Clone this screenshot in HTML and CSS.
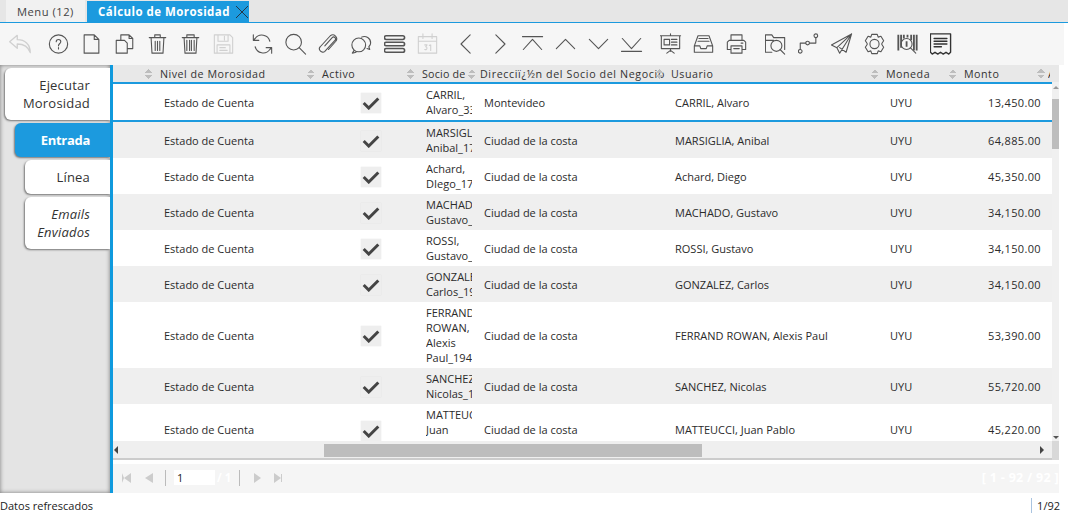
FILE: index.html
```html
<!DOCTYPE html>
<html lang="es">

<head>
    <meta charset="UTF-8">
    <title>Cálculo de Morosidad</title>
    <link rel="stylesheet" href="styles.css">
</head>

<body>
    <nav class="tabs">
        <a class="tab">Menu (12)</a>
        <a class="tab activa">Cálculo de Morosidad
            <svg class="cerrar" viewBox="0 0 12 12"><path d="M0 0L12 12M12 0L0 12" /></svg>
        </a>
    </nav>

    <div class="toolbar">
        <div class="grupo primero">
            <svg class="ico off" viewBox="0 0 24 24"><path d="M9 4L2 10l7 6v-4c6 0 10 2 12 8 0-8-5-12-12-12z" /></svg>
        </div>
        <div class="grupo">
            <svg class="ico" viewBox="0 0 24 24"><circle cx="12" cy="12" r="10" /><path d="M9.500 9.500c0-3.300 5-3.300 5 0 0 2-2.500 2-2.500 4.500M12 16v1.500" /></svg>
            <svg class="ico" viewBox="0 0 24 24"><path d="M4 2h11l5 5v15H4zM15 2v5h5" /></svg>
            <svg class="ico" viewBox="0 0 24 24"><path d="M3 8h9l3 3v11H3zM8 8V2h9l4 4v11h-6M17 2v4h4" /></svg>
            <svg class="ico" viewBox="0 0 24 24"><path d="M3 5h18M9 5V2h6v3M5 5l1 17h12l1-17M9.500 9v10M12 9v10M14.500 9v10" /></svg>
            <svg class="ico" viewBox="0 0 24 24"><path d="M3 5h18M8 5V2h8v3M5 5l1 17h12l1-17M8 8v11M11 8v11M13 8v11M16 8v11M8 2v3" /></svg>
            <svg class="ico off" viewBox="0 0 24 24"><path d="M2 2h17l3 3v17H2zM6 2v7h11V2M13 3.500v4M5 22v-9h14v9M8 16h6M8 19h8" /></svg>
        </div>
        <div class="grupo">
            <svg class="ico" viewBox="0 0 24 24"><path d="M20 9a9 9 0 0 0-16-3L2 8M2 2v6h6M4 15a9 9 0 0 0 16 3l2-2M22 22v-6h-6" /></svg>
            <svg class="ico" viewBox="0 0 24 24"><circle cx="10" cy="10" r="8.500" /><path d="M16 16l7 7" /></svg>
            <svg class="ico" viewBox="0 0 24 24"><path d="M8 14l8-9c2-2 5 1 3 3L8 20c-3 3-8-2-5-5L14 3c4-3 9 2 6 6l-8 9" /></svg>
            <svg class="ico" viewBox="0 0 24 24"><circle cx="9" cy="13" r="7.500" /><path d="M4 19l-2 3 4-1M12 4.500A7 7 0 0 1 22 11c0 2-1 3-2 4l1 3-3-1" /></svg>
            <svg class="ico gruesa" viewBox="0 0 24 24"><rect x="1" y="3" width="22" height="4" rx="2" /><rect x="1" y="10" width="22" height="4" rx="2" /><rect x="1" y="17" width="22" height="4" rx="2" /></svg>
            <svg class="ico off" viewBox="0 0 24 24"><path d="M2 4h20v18H2zM2 9h20M7 1v5M17 1v5M9 13h2.500l-1.500 2c2 0 2 4-1 3M14 13.500l1.500-.500V19" /></svg>
        </div>
        <div class="grupo">
            <svg class="ico" viewBox="0 0 24 24"><path d="M16 2L6 12l10 10" /></svg>
            <svg class="ico" viewBox="0 0 24 24"><path d="M8 2l10 10L8 22" /></svg>
            <svg class="ico" viewBox="0 0 24 24"><path d="M1 4h22M2 18L12 7l10 11" /></svg>
            <svg class="ico" viewBox="0 0 24 24"><path d="M2 17L12 7l10 10" /></svg>
            <svg class="ico" viewBox="0 0 24 24"><path d="M2 7l10 10L22 7" /></svg>
            <svg class="ico" viewBox="0 0 24 24"><path d="M2 6l10 11L22 6M1 20h22" /></svg>
        </div>
        <div class="grupo">
            <svg class="ico" viewBox="0 0 24 24"><path d="M1 3h22M2 3v14h20V3M12 1v2M12 17v3M12 19l-4 3M12 19l4 3M5 7h6v6H5zM13 7h6M13 10h6M13 13h6" /></svg>
            <svg class="ico" viewBox="0 0 24 24"><path d="M6 3h12l4 11v7H2v-7zM2 14h6l1 3h6l1-3h6M7 6h10M6 9h12" /></svg>
            <svg class="ico" viewBox="0 0 24 24"><path d="M6 8V2h12v6M6 18H2V10l2-2h16l2 2v8h-4M6 14h12v8H6zM9 17h6M17 11h2" /></svg>
        </div>
        <div class="grupo">
            <svg class="ico" viewBox="0 0 24 24"><path d="M8 21H1V2h7l2 3h12v13M1 8h9" /><circle cx="13" cy="14" r="6" /><path d="M17 18l5 5" /></svg>
            <svg class="ico" viewBox="0 0 24 24"><circle cx="3" cy="20" r="2" /><circle cx="11" cy="11" r="2" /><circle cx="20" cy="3" r="2" /><path d="M3 18v-7h6M13 11h7V5" /></svg>
            <svg class="ico" viewBox="0 0 24 24"><path d="M23 1L1 13l6 3 3 6zM23 1L7 16M23 1l-6 20-7-5" /></svg>
            <svg class="ico" viewBox="0 0 24 24"><path d="M9 1.500h6l1 3 3-1 3 5-2 3v1l2 3-3 5-3-1-1 3H9l-1-3-3 1-3-5 2-3v-1L2 8.500l3-5 3 1z" /><circle cx="12" cy="12" r="5" /></svg>
            <svg class="ico" viewBox="0 0 24 24"><path class="barra" d="M2 2v17M5 2v14M8 2v4M16 2v6M19 2v17M22 2v17M12 2v3" /><circle cx="11" cy="12" r="6" /><path class="barra" d="M11 9v6" /><path d="M15 16l6 6" /></svg>
            <svg class="ico negra" viewBox="0 0 24 24"><path d="M1 1h22v20l-2 2-3-2-3 2-3-2-3 2-3-2-3 2-2-2zM5 6h14M5 9h14M5 12h14M5 15h8" /></svg>
        </div>
    </div>

    <main class="contenido">
        <aside class="lateral">
            <a class="pestana">Ejecutar Morosidad</a>
            <a class="pestana sel nivel1">Entrada</a>
            <a class="pestana nivel2">Línea</a>
            <a class="pestana nivel2 cursiva">Emails Enviados</a>
        </aside>

        <section class="panel">
            <div class="grilla">
                <div class="titulos">
                    <div></div>
                    <div class="tit"><i class="orden"></i>Nivel de Morosidad</div>
                    <div class="tit"><i class="orden"></i>Activo</div>
                    <div class="tit corta"><i class="orden"></i><span>Socio del Negocio</span></div>
                    <div class="tit larga"><i class="orden"></i>Direcciï¿½n del Socio del Negocio</div>
                    <div class="tit"><i class="orden"></i>Usuario</div>
                    <div class="tit"><i class="orden"></i>Moneda</div>
                    <div class="tit"><i class="orden"></i>Monto</div>
                    <div class="tit corta2"><i class="orden"></i><span>A</span></div>
                </div>
                <div class="cuerpo">
                    <div class="filas" id="filas"></div>
                    <div class="vbar"><i class="fl arr"></i><b></b><i class="fl aba"></i></div>
                </div>
                <div class="hbar">
                    <div class="htrack"><i class="fl izq"></i><b></b><i class="fl der"></i></div>
                    <div class="esquina"></div>
                </div>
            </div>

            <div class="pager">
                <i class="pg primero-pg"></i>
                <i class="pg atras"></i>
                <span class="sep"></span>
                <input class="pagina" value="1">
                <span class="de">/ 1</span>
                <span class="sep"></span>
                <i class="pg adelante"></i>
                <i class="pg ultimo-pg"></i>
                <span class="total">[ 1 - 92 / 92 ]</span>
            </div>
        </section>
    </main>

    <footer class="estado">
        <span>Datos refrescados</span>
        <span class="cuenta">1/92</span>
    </footer>

    <template>
        <div class="fila">
            <div></div>
            <div class="nivel">Estado de Cuenta</div>
            <div class="activo"><span class="check"><svg viewBox="0 0 16 12"><path d="M1.500 6L6 10.500 14.500 2" /></svg></span></div>
            <div class="socio"><span></span></div>
            <div class="dir"></div>
            <div class="usu"></div>
            <div class="mon">UYU</div>
            <div class="monto"></div>
        </div>
    </template>

    <script>
        const datos = [
            ["CARRIL, Alvaro_3301", "Montevideo", "CARRIL, Alvaro", "13,450.00"],
            ["MARSIGLIA, Anibal_1730", "Ciudad de la costa", "MARSIGLIA, Anibal", "64,885.00"],
            ["Achard, DIego_1752", "Ciudad de la costa", "Achard, Diego", "45,350.00"],
            ["MACHADO, Gustavo_1811", "Ciudad de la costa", "MACHADO, Gustavo", "34,150.00"],
            ["ROSSI, Gustavo_1820", "Ciudad de la costa", "ROSSI, Gustavo", "34,150.00"],
            ["GONZALEZ, Carlos_1903", "Ciudad de la costa", "GONZALEZ, Carlos", "34,150.00"],
            ["FERRAND ROWAN, Alexis Paul_1940", "Ciudad de la costa", "FERRAND ROWAN, Alexis Paul", "53,390.00"],
            ["SANCHEZ, Nicolas_1955", "Ciudad de la costa", "SANCHEZ, Nicolas", "55,720.00"],
            ["MATTEUCCI, Juan Pablo_1960", "Ciudad de la costa", "MATTEUCCI, Juan Pablo", "45,220.00"]
        ];

        const filas = document.querySelector("#filas");
        const plantilla = document.querySelector("template").content;

        datos.forEach((d, i) => {
            const klon = plantilla.cloneNode(true);
            klon.querySelector(".socio span").textContent = d[0];
            klon.querySelector(".dir").textContent = d[1];
            klon.querySelector(".usu").textContent = d[2];
            klon.querySelector(".monto").textContent = d[3];
            if (i == 0) klon.querySelector(".fila").classList.add("actual");
            filas.appendChild(klon);
        });
    </script>
</body>

</html>
```

FILE: styles.css
```css
* {
    box-sizing: border-box;
}

html,
body {
    height: 100%;
}

body {
    margin: 0;
    display: flex;
    flex-direction: column;
    height: 514px;
    overflow: hidden;
    font-family: "Open Sans", Arial, sans-serif;
    font-size: 11px;
    color: #2b2b2b;
    background-color: white;
}

/* pestanas de arriba */
.tabs {
    display: flex;
    height: 23px;
    padding-left: 6px;
    gap: 2px;
    background-color: #e6e6e6;
    border-bottom: 1px solid #1c9ade;
    flex: none;
}

.tab {
    display: flex;
    align-items: center;
    width: 79px;
    height: 22px;
    padding: 0 11px;
    font-size: 11.200px;
    letter-spacing: 0.500px;
    color: #444;
    background-color: #f1f1f1;
}

.tab.activa {
    margin-top: 1px;
    height: 21px;
    width: 162px;
    font-size: 11.500px;
    letter-spacing: 0.450px;
    color: white;
    font-weight: bold;
    background-color: #1c9ade;
    white-space: nowrap;
}

.cerrar {
    width: 12px;
    height: 12px;
    margin-left: 6px;
    flex: none;
    fill: none;
    stroke: #23384a;
    stroke-width: 1;
}

/* barra de iconos */
.toolbar {
    display: flex;
    align-items: center;
    gap: 6px;
    flex: none;
    width: 1064px;
    height: 42px;
    padding-left: 4px;
    background-color: #f6f6f6;
}

.grupo {
    display: flex;
}

.grupo.primero {
    margin-right: -1px;
}

.ico {
    width: 33px;
    height: 22px;
    padding: 0 5.500px;
    fill: none;
    stroke: #555;
    stroke-width: 1.200;
    stroke-linejoin: round;
    stroke-linecap: round;
}

.primero .ico {
    height: 26px;
    padding: 0 3px;
}

.ico.off {
    stroke: #d0d0d0;
}

.ico.gruesa {
    stroke-width: 1.700;
}

.ico.negra {
    stroke: #333;
    stroke-width: 1.500;
}

.ico .barra {
    stroke-width: 2;
    stroke-linecap: butt;
}

/* parte central */
.contenido {
    display: flex;
    flex: 1;
    min-height: 0;
}

.lateral {
    display: flex;
    flex-direction: column;
    align-items: flex-end;
    gap: 3px;
    flex: none;
    width: 113px;
    padding: 3px 0 0 5px;
    background-color: #e4e4e4;
    border-right: 3px solid #0f9ade;
    box-shadow: inset 0 0 4px #777;
}

.pestana {
    display: flex;
    align-items: center;
    justify-content: flex-end;
    width: 105px;
    min-height: 34px;
    padding: 0 20px 0 10px;
    font-size: 13px;
    letter-spacing: 0.200px;
    line-height: 18px;
    text-align: right;
    color: #333;
    background-color: white;
    border-radius: 6px 0 0 6px;
    box-shadow: -1px 1px 2px #777;
}

.pestana:first-child {
    height: 52px;
}

.pestana.nivel1 {
    width: 95px;
}

.pestana.nivel2 {
    width: 85px;
}

.pestana.cursiva {
    height: 52px;
    font-style: italic;
}

.pestana.sel {
    font-weight: bold;
    letter-spacing: -0.300px;
    color: white;
    background-color: #1c9ade;
}

.panel {
    display: flex;
    flex-direction: column;
    flex: none;
    width: 946px;
}

.grilla {
    flex: 1;
    min-height: 0;
    display: flex;
    flex-direction: column;
}

.titulos {
    display: grid;
    grid-template-columns: 32px 162px 100px 58px 191px 215px 78px 88px 13px;
    flex: none;
    height: 17px;
    font-size: 10.700px;
    background-color: #e8e8e8;
    overflow: hidden;
}

.tit {
    display: flex;
    align-items: center;
    gap: 7px;
    white-space: nowrap;
    letter-spacing: 0.500px;
    color: #333;
}

.tit.larga {
    gap: 4px;
    letter-spacing: 0.620px;
}

.tit.larga .orden {
    margin-left: 3px;
}

.tit.corta span {
    display: block;
    width: 48px;
    overflow: hidden;
    letter-spacing: 0.200px;
}

.tit.corta2 span {
    width: 4px;
    margin-left: -4px;
    overflow: hidden;
}

.orden {
    display: block;
    flex: none;
    width: 8px;
    height: 10px;
    background:
        linear-gradient(to top left, #bdbdbd 50%, transparent 50%) 0 0 / 4px 4px no-repeat,
        linear-gradient(to top right, #bdbdbd 50%, transparent 50%) 4px 0 / 4px 4px no-repeat,
        linear-gradient(to bottom left, #bdbdbd 50%, transparent 50%) 0 6px / 4px 4px no-repeat,
        linear-gradient(to bottom right, #bdbdbd 50%, transparent 50%) 4px 6px / 4px 4px no-repeat;
}

.cuerpo {
    display: flex;
    flex: 1;
    min-height: 0;
}

.filas {
    flex: none;
    width: 939px;
    overflow: hidden;
}

.fila {
    display: grid;
    grid-template-columns: 47px 162px 100px 58px 191px 215px 78px 81px 7px;
    align-items: center;
    min-height: 36px;
    padding: 3px 0;
    line-height: 15px;
    background-color: white;
}

.fila:nth-child(even) {
    background-color: #efefef;
}

.fila.actual {
    height: 40px;
    border-top: 2px solid #1c9ade;
    border-bottom: 2px solid #1c9ade;
}

.nivel,
.dir,
.usu,
.mon {
    padding-left: 4px;
    white-space: nowrap;
}

.activo {
    display: flex;
    justify-content: center;
    padding: 2px 3px 0 0;
}

.check {
    display: flex;
    align-items: center;
    justify-content: center;
    width: 20px;
    height: 20px;
    background-color: #eeeeee;
    box-shadow: 0 0 1px #dddddd;
}

.check svg {
    width: 18px;
    height: 14px;
    fill: none;
    stroke: #444;
    stroke-width: 2.600;
}

.socio {
    padding-left: 4px;
}

.socio span {
    display: block;
    width: 46px;
    overflow: hidden;
}

.monto {
    padding-right: 4px;
    text-align: right;
    letter-spacing: 0.350px;
}

/* barras de desplazamiento */
.vbar {
    position: relative;
    flex: none;
    width: 7px;
    background-color: #f0f0f0;
}

.vbar b {
    position: absolute;
    top: 17px;
    left: 0;
    width: 7px;
    height: 50px;
    background-color: #bdbdbd;
}

.fl {
    position: absolute;
    width: 0;
    height: 0;
    border: 3px solid transparent;
}

.fl.arr {
    top: 4px;
    left: 1px;
    border-top: 0;
    border-bottom-color: #999;
}

.fl.aba {
    bottom: 8px;
    left: 1px;
    border-bottom: 0;
    border-top-color: #555;
}

.hbar {
    display: flex;
    flex: none;
    height: 23px;
    margin-top: -6px;
    z-index: 1;
}

.htrack {
    position: relative;
    flex: none;
    width: 939px;
    height: 19px;
    background-color: #efefef;
    border-bottom: 2px solid #ccc;
}

.htrack b {
    position: absolute;
    top: 3px;
    left: 211px;
    width: 378px;
    height: 13px;
    background-color: #bdbdbd;
}

.fl.izq,
.fl.der {
    top: 5px;
    border-width: 4px;
}

.fl.izq {
    left: 1px;
    border-left: 0;
    border-right-color: #444;
}

.fl.der {
    right: 8px;
    border-right: 0;
    border-left-color: #444;
}

.esquina {
    flex: none;
    width: 7px;
    height: 19px;
    background-color: #d8d8d8;
}

/* paginador */
.pager {
    display: flex;
    align-items: center;
    flex: none;
    height: 29px;
    padding: 0 0 2px 9px;
    background-color: #f5f5f5;
    color: white;
}

.pg {
    display: block;
    width: 0;
    height: 0;
    border: 5px solid transparent;
}

.primero-pg {
    width: 9px;
    border-left: 1px solid #ccc;
    border-right-color: #ccc;
    border-right-width: 7px;
    border-left-width: 2px;
    margin-right: 12px;
}

.atras {
    border-left: 0;
    border-right: 8px solid #ccc;
    margin-left: 2px;
    margin-right: 12px;
}

.sep {
    display: block;
    width: 1px;
    height: 16px;
    background-color: #bbb;
}

.pagina {
    width: 41px;
    height: 15px;
    margin-left: 8px;
    padding: 0 0 0 3px;
    border: 0;
    font: inherit;
    color: #222;
    background-color: white;
}

.de {
    width: 24px;
    padding-left: 2px;
    font-weight: bold;
    font-size: 11.500px;
    white-space: nowrap;
}

.adelante {
    border-right: 0;
    border-left: 7px solid #ccc;
    margin-left: 14px;
    margin-right: 13px;
}

.ultimo-pg {
    border-right: 0;
    border-left: 7px solid #ccc;
    box-shadow: 2px 0 0 -1px #ccc;
}

.total {
    margin-left: auto;
    font-weight: bold;
    font-size: 12.500px;
    letter-spacing: 0.300px;
    white-space: nowrap;
}

/* pie */
.estado {
    display: flex;
    justify-content: space-between;
    align-items: center;
    flex: none;
    height: 21px;
    padding: 4px 8px 0 0;
    font-size: 11px;
    color: #222;
    background-color: white;
}

.cuenta {
    padding-left: 5px;
    border-left: 1px solid #aac4e0;
}
```
